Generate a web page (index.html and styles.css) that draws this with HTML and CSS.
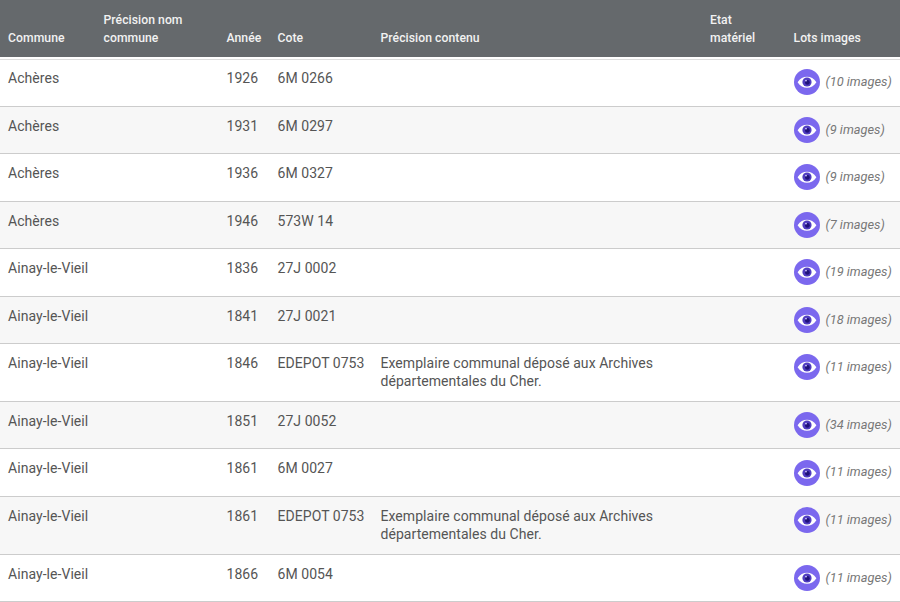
FILE: index.html
```html
<!DOCTYPE html>
<html lang="fr">
<head>
<meta charset="utf-8">
<title>Lots images</title>
<link rel="stylesheet" href="styles.css">
</head>
<body>
<svg class="defs" width="0" height="0" aria-hidden="true">
  <symbol id="eye" viewBox="0 0 26 26">
    <circle cx="13" cy="13" r="13" fill="#7b68ee"/>
    <path d="M3.6 13.2C6 9.4 9.400 7.800 13 7.800s7 1.600 9.400 5.400C20 17 16.600 18.800 13 18.800s-7-1.800-9.400-5.600z" fill="#fff"/>
    <circle cx="13" cy="13" r="4.600" fill="#4f3cc0"/>
    <circle cx="13.400" cy="13.400" r="2.400" fill="#20127a"/>
    <circle cx="12" cy="11.600" r="0.900" fill="#cfc8fa"/>
  </symbol>
</svg>
<table class="lots">
  <thead>
    <tr>
      <th class="c-commune">Commune</th>
      <th class="c-precision">Précision nom commune</th>
      <th class="c-annee">Année</th>
      <th class="c-cote">Cote</th>
      <th class="c-contenu">Précision contenu</th>
      <th class="c-etat">Etat matériel</th>
      <th class="c-lots">Lots images</th>
    </tr>
  </thead>
  <tbody>
    <tr><td class="nom">Achères</td><td></td><td>1926</td><td>6M 0266</td><td></td><td></td><td class="images"><span class="lot"><svg class="eye"><use href="#eye"/></svg><em>(10 images)</em></span></td></tr>
    <tr><td class="nom">Achères</td><td></td><td>1931</td><td>6M 0297</td><td></td><td></td><td class="images"><span class="lot"><svg class="eye"><use href="#eye"/></svg><em>(9 images)</em></span></td></tr>
    <tr><td class="nom">Achères</td><td></td><td>1936</td><td>6M 0327</td><td></td><td></td><td class="images"><span class="lot"><svg class="eye"><use href="#eye"/></svg><em>(9 images)</em></span></td></tr>
    <tr><td class="nom">Achères</td><td></td><td>1946</td><td>573W 14</td><td></td><td></td><td class="images"><span class="lot"><svg class="eye"><use href="#eye"/></svg><em>(7 images)</em></span></td></tr>
    <tr><td class="nom">Ainay-le-Vieil</td><td></td><td>1836</td><td>27J 0002</td><td></td><td></td><td class="images"><span class="lot"><svg class="eye"><use href="#eye"/></svg><em>(19 images)</em></span></td></tr>
    <tr><td class="nom">Ainay-le-Vieil</td><td></td><td>1841</td><td>27J 0021</td><td></td><td></td><td class="images"><span class="lot"><svg class="eye"><use href="#eye"/></svg><em>(18 images)</em></span></td></tr>
    <tr><td class="nom">Ainay-le-Vieil</td><td></td><td>1846</td><td>EDEPOT 0753</td><td>Exemplaire communal déposé aux Archives départementales du Cher.</td><td></td><td class="images"><span class="lot"><svg class="eye"><use href="#eye"/></svg><em>(11 images)</em></span></td></tr>
    <tr><td class="nom">Ainay-le-Vieil</td><td></td><td>1851</td><td>27J 0052</td><td></td><td></td><td class="images"><span class="lot"><svg class="eye"><use href="#eye"/></svg><em>(34 images)</em></span></td></tr>
    <tr><td class="nom">Ainay-le-Vieil</td><td></td><td>1861</td><td>6M 0027</td><td></td><td></td><td class="images"><span class="lot"><svg class="eye"><use href="#eye"/></svg><em>(11 images)</em></span></td></tr>
    <tr><td class="nom">Ainay-le-Vieil</td><td></td><td>1861</td><td>EDEPOT 0753</td><td>Exemplaire communal déposé aux Archives départementales du Cher.</td><td></td><td class="images"><span class="lot"><svg class="eye"><use href="#eye"/></svg><em>(11 images)</em></span></td></tr>
    <tr><td class="nom">Ainay-le-Vieil</td><td></td><td>1866</td><td>6M 0054</td><td></td><td></td><td class="images"><span class="lot"><svg class="eye"><use href="#eye"/></svg><em>(11 images)</em></span></td></tr>
  </tbody>
</table>
</body>
</html>
```
FILE: styles.css
```css
html, body {
  margin: 0;
  padding: 0;
  background: #fff;
  overflow: hidden;
}
.defs {
  display: block;
  height: 0;
}
.lots {
  width: 900px;
  table-layout: fixed;
  border-collapse: separate;
  border-spacing: 0;
  font-family: Roboto, "Liberation Sans", sans-serif;
  font-size: 14px;
  letter-spacing: 0.05px;
  line-height: 18.4px;
  color: #555;
}
.lots th {
  background: #65696c;
  background-clip: padding-box;
  color: #f2f2f2;
  font-weight: 500;
  font-size: 12.2px;
  line-height: 18px;
  text-align: left;
  vertical-align: bottom;
  padding: 11px 8px 10px;
  border-bottom: 2px solid #fff;
}
.c-commune { width: 79.5px; }
.c-precision { width: 107px; }
.c-annee { width: 35px; }
.c-cote { width: 87px; }
.c-contenu { width: 313.5px; }
.c-etat { width: 67.5px; }
.lots td {
  padding: 10px 8px;
  vertical-align: top;
  border-bottom: 1px solid #ccc;
}
.lots td.nom {
  padding-right: 0;
  white-space: nowrap;
}
.lots tbody tr:first-child td {
  border-top: 1px solid #ddd;
  padding-top: 9px;
}
.lots tbody tr:nth-child(even) td {
  background: #f7f7f7;
}
.lots td.images {
  padding-right: 0;
  white-space: nowrap;
}
.lot {
  display: flex;
  align-items: center;
  gap: 6px;
  height: 26.5px;
}
.eye {
  width: 26px;
  height: 26px;
  flex: none;
}
.lot em {
  font-size: 12.8px;
  letter-spacing: 0;
  color: #777;
}
```
